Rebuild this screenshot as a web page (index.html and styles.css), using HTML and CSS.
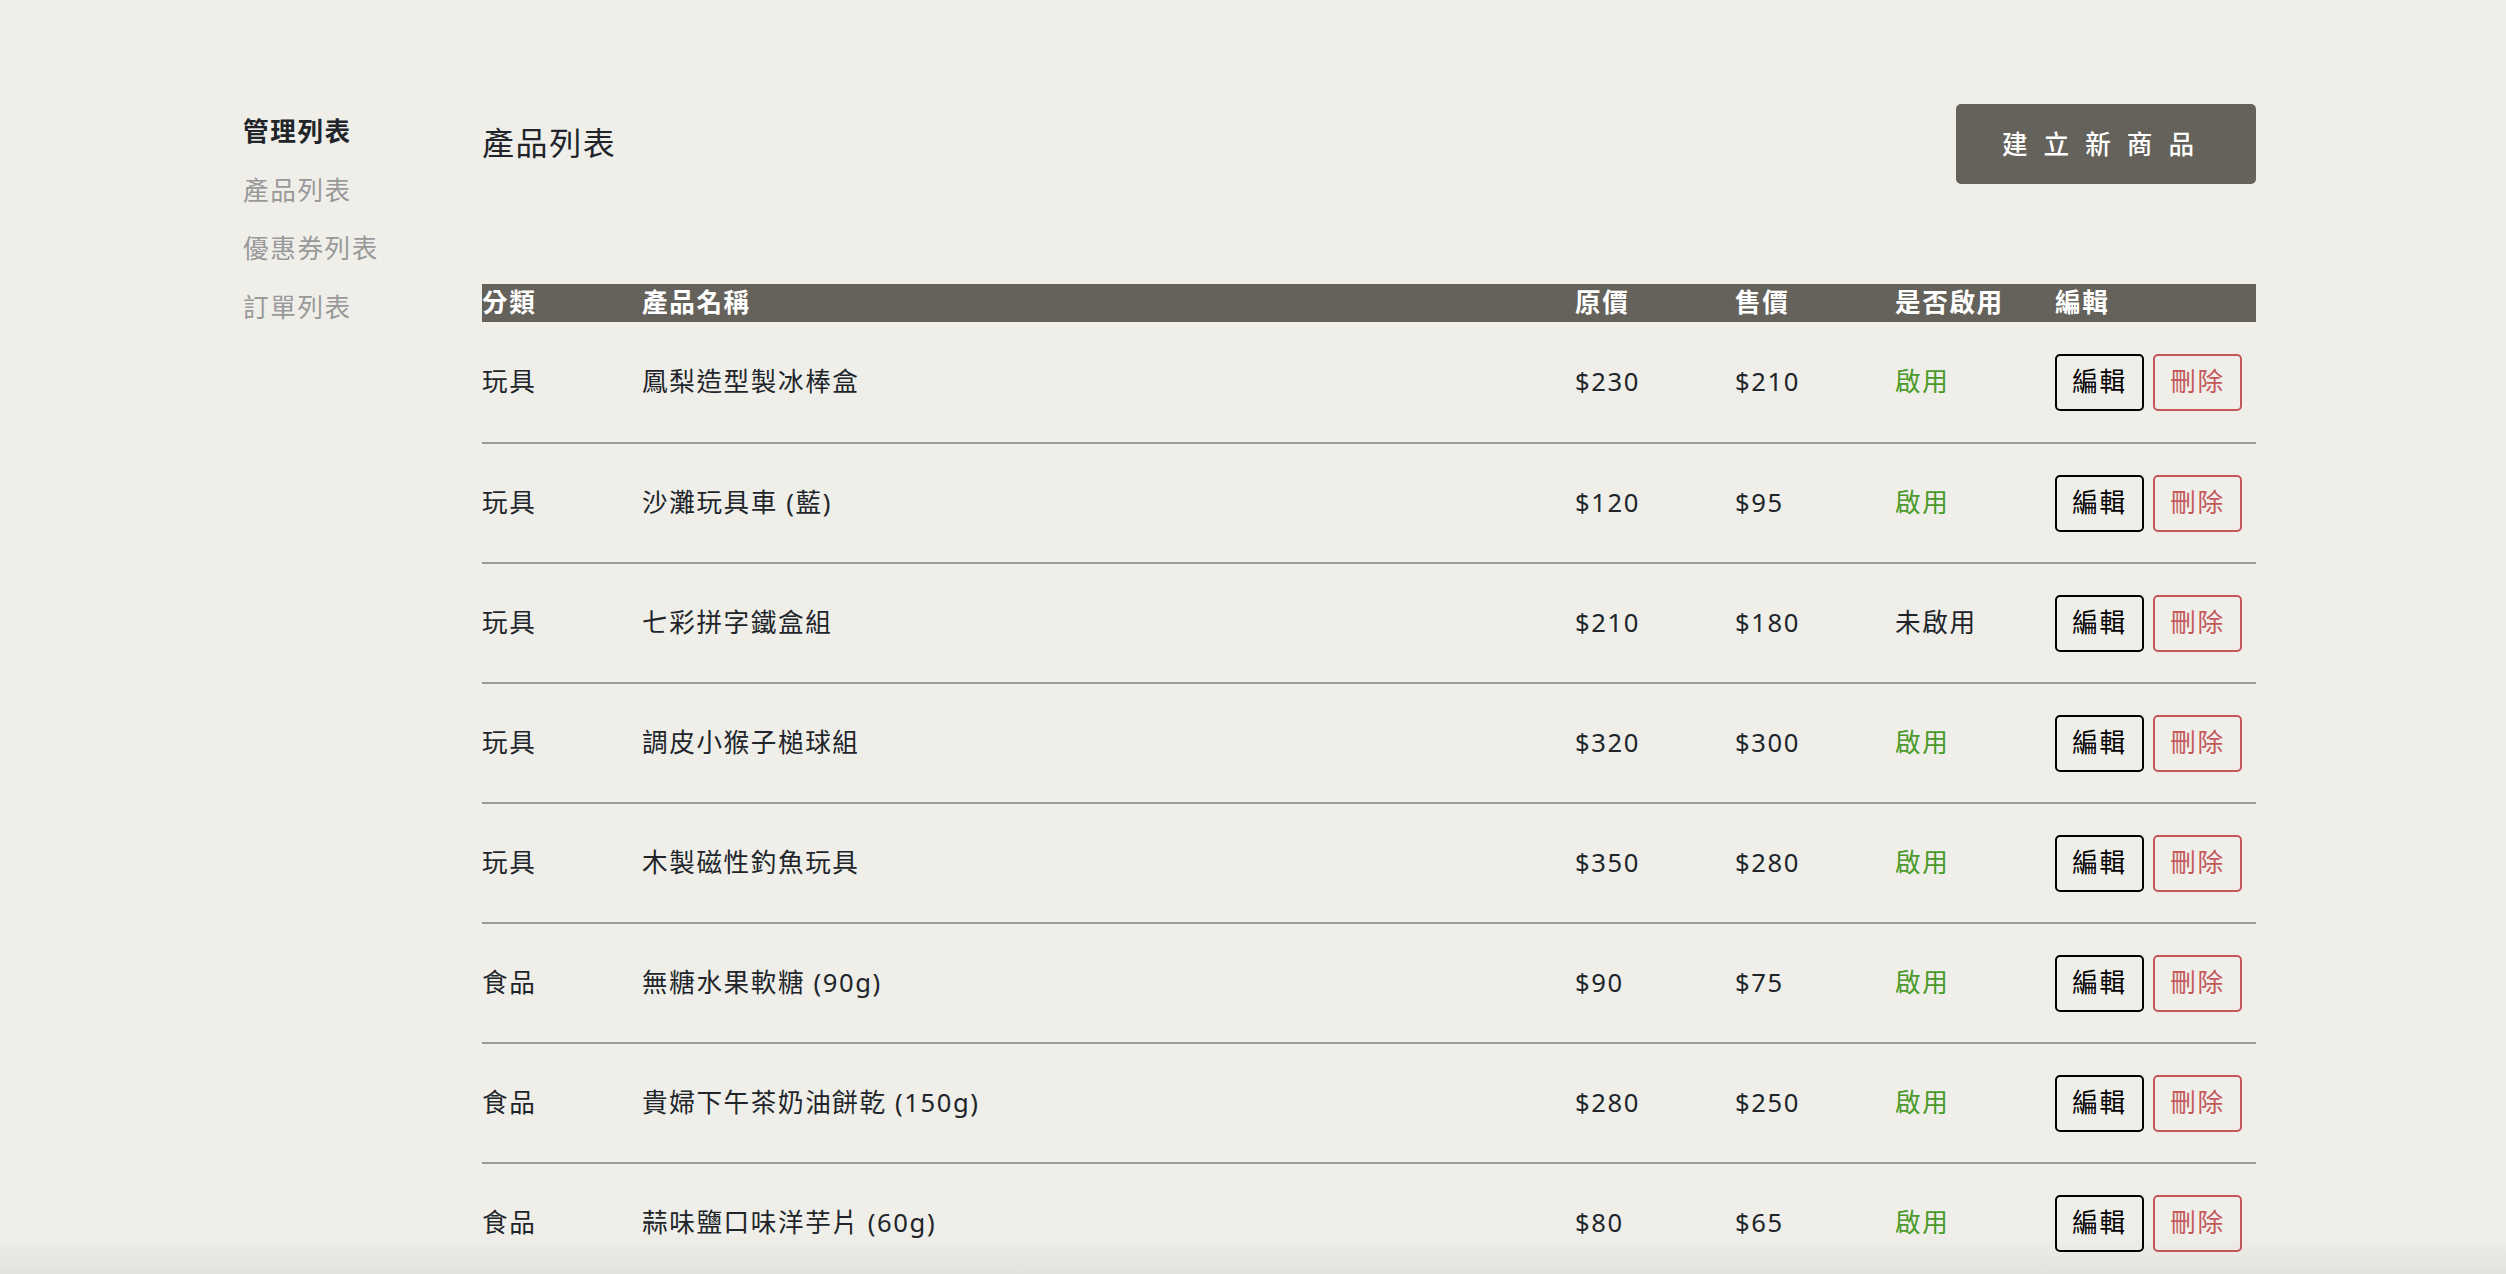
FILE: index.html
```html
<!DOCTYPE html>
<html lang="zh-Hant">
<head>
<meta charset="utf-8">
<title>產品列表</title>
<link rel="stylesheet" href="styles.css">
</head>
<body>
<div class="page">
  <nav class="sidebar">
    <div class="side-title">管理列表</div>
    <a class="side-link" href="#">產品列表</a>
    <a class="side-link" href="#">優惠券列表</a>
    <a class="side-link" href="#">訂單列表</a>
  </nav>
  <main class="main">
    <div class="topbar">
      <h1 class="title">產品列表</h1>
      <button class="create-btn">建立新商品</button>
    </div>
    <table class="products">
      <colgroup>
        <col class="c-cat"><col class="c-name"><col class="c-price"><col class="c-price"><col class="c-price"><col class="c-edit">
      </colgroup>
      <thead>
        <tr><th>分類</th><th>產品名稱</th><th>原價</th><th>售價</th><th>是否啟用</th><th>編輯</th></tr>
      </thead>
      <tbody>
        <tr><td>玩具</td><td>鳳梨造型製冰棒盒</td><td>$230</td><td>$210</td><td class="on">啟用</td><td><div class="acts"><button class="btn-edit">編輯</button><button class="btn-del">刪除</button></div></td></tr>
        <tr><td>玩具</td><td>沙灘玩具車 (藍)</td><td>$120</td><td>$95</td><td class="on">啟用</td><td><div class="acts"><button class="btn-edit">編輯</button><button class="btn-del">刪除</button></div></td></tr>
        <tr><td>玩具</td><td>七彩拼字鐵盒組</td><td>$210</td><td>$180</td><td>未啟用</td><td><div class="acts"><button class="btn-edit">編輯</button><button class="btn-del">刪除</button></div></td></tr>
        <tr><td>玩具</td><td>調皮小猴子槌球組</td><td>$320</td><td>$300</td><td class="on">啟用</td><td><div class="acts"><button class="btn-edit">編輯</button><button class="btn-del">刪除</button></div></td></tr>
        <tr><td>玩具</td><td>木製磁性釣魚玩具</td><td>$350</td><td>$280</td><td class="on">啟用</td><td><div class="acts"><button class="btn-edit">編輯</button><button class="btn-del">刪除</button></div></td></tr>
        <tr><td>食品</td><td>無糖水果軟糖 (90g)</td><td>$90</td><td>$75</td><td class="on">啟用</td><td><div class="acts"><button class="btn-edit">編輯</button><button class="btn-del">刪除</button></div></td></tr>
        <tr><td>食品</td><td>貴婦下午茶奶油餅乾 (150g)</td><td>$280</td><td>$250</td><td class="on">啟用</td><td><div class="acts"><button class="btn-edit">編輯</button><button class="btn-del">刪除</button></div></td></tr>
        <tr><td>食品</td><td>蒜味鹽口味洋芋片 (60g)</td><td>$80</td><td>$65</td><td class="on">啟用</td><td><div class="acts"><button class="btn-edit">編輯</button><button class="btn-del">刪除</button></div></td></tr>
      </tbody>
    </table>
  </main>
</div>
<div class="shade"></div>
</body>
</html>
```

FILE: styles.css
```css
* { box-sizing: border-box; }
html, body { margin: 0; padding: 0; }
body {
  background: #efeee9;
  color: #212529;
  font-family: "Noto Sans", "Noto Sans CJK TC", sans-serif;
  font-size: 25.6px;
  line-height: 1.5;
  letter-spacing: 1.6px;
}
.page {
  display: flex;
  padding: 100px 250px 0 243px;
}
.sidebar {
  width: 239px;
  flex: none;
  display: flex;
  flex-direction: column;
  margin-top: 3px;
}
.side-title, .side-link {
  height: 58.6px;
  line-height: 58.6px;
  white-space: nowrap;
}
.side-title { font-weight: 600; color: #212529; }
.side-link { color: #999; text-decoration: none; }
.main { flex: 1; min-width: 0; }
.topbar {
  display: flex;
  justify-content: space-between;
  align-items: flex-start;
  padding-top: 4px;
  height: 184px;
}
.title {
  margin: 15px 0 0;
  font-size: 32px;
  font-weight: 400;
  line-height: 48px;
}
.create-btn {
  width: 300px;
  height: 80px;
  border: 0;
  border-radius: 5px;
  background: #65625b;
  color: #fff;
  font-family: inherit;
  font-size: 25.6px;
  font-weight: 500;
  letter-spacing: 16px;
  padding: 0 0 2px 0;
}
.products {
  width: 100%;
  border-collapse: collapse;
  table-layout: fixed;
}
.c-cat { width: 160px; }
.c-price { width: 160px; }
.c-edit { width: 201px; }
.products th {
  background: #65625b;
  color: #fff;
  font-weight: 700;
  text-align: left;
  padding: 0;
  height: 38px;
  line-height: 38px;
}
.products td {
  padding: 30.5px 0;
  border-bottom: 2px solid #9a9a9a;
  vertical-align: middle;
  white-space: nowrap;
}
.products tbody tr:first-child td { padding-top: 31.5px; padding-bottom: 31.5px; }
.products td.on { color: #4a9a2a; }
.acts { display: flex; gap: 9px; }
.btn-edit, .btn-del {
  font-family: inherit;
  font-size: 25.6px;
  letter-spacing: 1.6px;
  line-height: 38px;
  height: 57px;
  width: 89px;
  padding: 7.5px 0;
  border-radius: 5px;
  background: transparent;
  text-align: center;
}
.btn-edit { border: 2px solid #000; color: #000; }
.btn-del { border: 2px solid #c4575a; color: #c4575a; }
.shade {
  position: fixed;
  left: 0; right: 0; bottom: 0;
  height: 40px;
  background: linear-gradient(to bottom, rgba(0,0,0,0), rgba(60,55,40,0.06));
  pointer-events: none;
}
```
